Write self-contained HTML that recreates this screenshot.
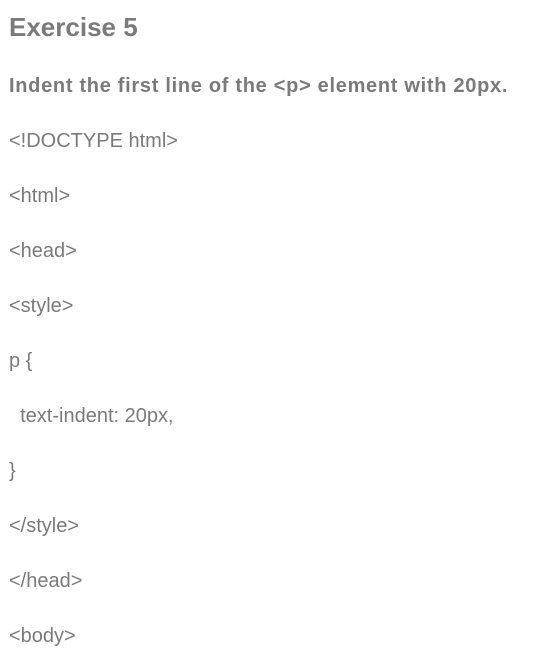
<!DOCTYPE html>
<html><head><style>
body{margin:0;background:#fff;color:#7a7a7a;font-family:"Liberation Sans",sans-serif;width:536px;height:660px;overflow:hidden;position:relative}
div{position:absolute;left:9px;white-space:pre}
.t{font-size:26px;font-weight:bold;top:12px}
.s{font-size:20px;font-weight:bold;top:75px;letter-spacing:0.7px}
.l{font-size:20px}
</style></head><body>
<div class="t">Exercise 5</div>
<div class="s">Indent the first line of the &lt;p&gt; element with 20px.</div>
<div class="l" style="top:130px">&lt;!DOCTYPE html&gt;</div>
<div class="l" style="top:185px">&lt;html&gt;</div>
<div class="l" style="top:240px">&lt;head&gt;</div>
<div class="l" style="top:295px">&lt;style&gt;</div>
<div class="l" style="top:350px">p {</div>
<div class="l" style="top:405px">  text-indent: 20px,</div>
<div class="l" style="top:460px">}</div>
<div class="l" style="top:515px">&lt;/style&gt;</div>
<div class="l" style="top:570px">&lt;/head&gt;</div>
<div class="l" style="top:625px">&lt;body&gt;</div>
</body></html>
